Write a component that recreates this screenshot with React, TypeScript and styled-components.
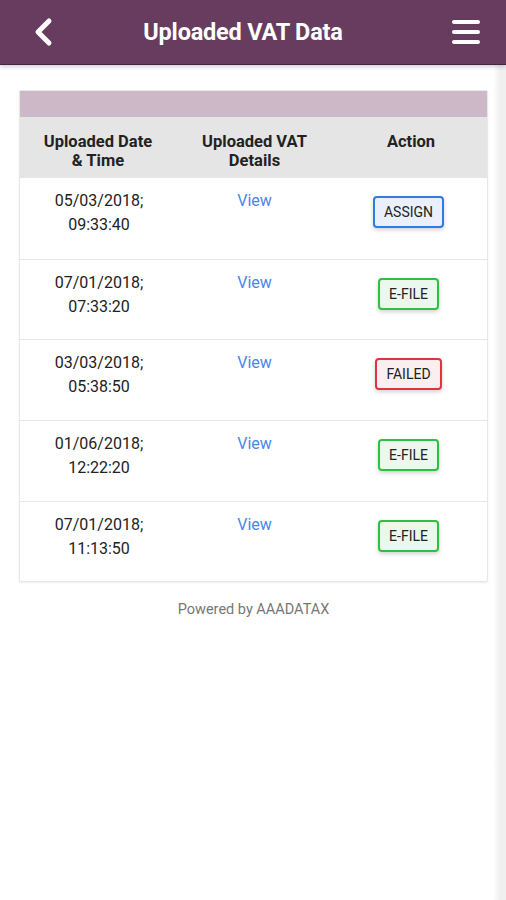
import React from 'react';
import styled, { createGlobalStyle } from 'styled-components';

const GlobalStyle = createGlobalStyle`
  html, body {
    margin: 0;
    padding: 0;
    background: #ffffff;
  }
  body {
    font-family: Roboto, "Liberation Sans", Arial, sans-serif;
  }
`;

type Status = 'assign' | 'efile' | 'failed';

interface IUpload {
  date: string;
  time: string;
  status: Status;
}

const uploads: IUpload[] = [
  { date: '05/03/2018;', time: '09:33:40', status: 'assign' },
  { date: '07/01/2018;', time: '07:33:20', status: 'efile' },
  { date: '03/03/2018;', time: '05:38:50', status: 'failed' },
  { date: '01/06/2018;', time: '12:22:20', status: 'efile' },
  { date: '07/01/2018;', time: '11:13:50', status: 'efile' },
];

const statusStyle: Record<Status, { label: string; border: string; bg: string }> = {
  assign: { label: 'ASSIGN', border: '#2f7be0', bg: '#eaf0fb' },
  efile: { label: 'E-FILE', border: '#2fc043', bg: '#ecf7ee' },
  failed: { label: 'FAILED', border: '#e0323f', bg: '#fbeeee' },
};

const Page = styled.div`
  min-height: 900px;
  display: flex;
  flex-direction: column;
  background: linear-gradient(to right, #ffffff 0, #ffffff 493px, #f0f0f0 500px, #f0f0f0 100%);
`;

const TopBar = styled.header`
  height: 64px;
  background: #683c5f;
  border-bottom: 1px solid #4d2145;
  box-shadow: 0 2px 4px rgba(0, 0, 0, 0.18);
  display: flex;
  align-items: center;
  justify-content: space-between;
  padding: 0 24px 0 28px;
  position: relative;
  z-index: 1;
`;

const Title = styled.h1`
  margin: 0 0 0 -24px;
  color: #ffffff;
  font-size: 23.5px;
  font-weight: 700;
  letter-spacing: -0.2px;
`;

const IconButton = styled.div`
  width: 32px;
  height: 32px;
  display: flex;
  align-items: center;
  justify-content: center;
`;

const Content = styled.main`
  padding: 25px 18px 0 19px;
  width: 469px;
  display: flex;
  flex-direction: column;
  align-items: stretch;
`;

const Card = styled.div`
  background: #ffffff;
  border: 1px solid #e8e8e8;
  border-radius: 2px;
  box-shadow: 0 1px 2px rgba(0, 0, 0, 0.08);
`;

const Band = styled.div`
  height: 26px;
  background: #cdb8c8;
`;

const Grid = styled.div`
  display: grid;
  grid-template-columns: 156px 157px 156px;
`;

const HeadRow = styled(Grid)`
  background: #e5e5e5;
  height: 61px;
  align-items: start;
`;

const HeadCell = styled.div`
  text-align: center;
  font-size: 16.5px;
  font-weight: 700;
  line-height: 19px;
  color: #222222;
  padding: 15px 6px 0;
`;

const Row = styled(Grid)`
  height: 80.7px;
  border-top: 1px solid #e6e6e6;
  box-sizing: border-box;
  &:first-child {
    border-top: none;
  }
`;

const DateCell = styled.div`
  text-align: center;
  font-size: 16px;
  line-height: 24px;
  color: #222222;
  padding-top: 11px;
  padding-left: 2px;
`;

const ViewLink = styled.a`
  justify-self: center;
  font-size: 16px;
  line-height: 24px;
  color: #4a86e8;
  padding-top: 11px;
  text-decoration: none;
`;

const ActionCell = styled.div`
  display: flex;
  justify-content: center;
  padding-top: 18px;
  padding-right: 5px;
`;

const StatusButton = styled.button<{ $border: string; $bg: string }>`
  height: 32px;
  padding: 0 9px;
  font-family: Roboto, "Liberation Sans", Arial, sans-serif;
  font-size: 14px;
  color: #222222;
  background: ${(p) => p.$bg};
  border: 2px solid ${(p) => p.$border};
  border-radius: 4px;
  box-shadow: 0 2px 4px rgba(0, 0, 0, 0.18);
`;

const Footer = styled.p`
  margin: 19px 0 0;
  text-align: center;
  font-size: 14.5px;
  color: #777777;
`;

const BackIcon = () => (
  <svg width="24" height="30" viewBox="0 0 24 30">
    <path d="M17 4 L6 15 L17 26" fill="none" stroke="#fff" strokeWidth="5" strokeLinecap="round" strokeLinejoin="round" />
  </svg>
);

const MenuIcon = () => (
  <svg width="32" height="28" viewBox="0 0 32 28">
    <g stroke="#fff" strokeWidth="4" strokeLinecap="round">
      <line x1="4" y1="4" x2="28" y2="4" />
      <line x1="4" y1="14" x2="28" y2="14" />
      <line x1="4" y1="24" x2="28" y2="24" />
    </g>
  </svg>
);

const App: React.FunctionComponent = () => {
  return (
    <Page>
      <GlobalStyle />
      <TopBar>
        <IconButton><BackIcon /></IconButton>
        <Title>Uploaded VAT Data</Title>
        <IconButton><MenuIcon /></IconButton>
      </TopBar>
      <Content>
        <Card>
          <Band />
          <HeadRow>
            <HeadCell>Uploaded Date<br />&amp; Time</HeadCell>
            <HeadCell>Uploaded VAT<br />Details</HeadCell>
            <HeadCell>Action</HeadCell>
          </HeadRow>
          <div>
            {uploads.map((elem, key) => {
              const s = statusStyle[elem.status];
              return (
                <Row key={key}>
                  <DateCell>{elem.date}<br />{elem.time}</DateCell>
                  <ViewLink href="#">View</ViewLink>
                  <ActionCell>
                    <StatusButton $border={s.border} $bg={s.bg}>{s.label}</StatusButton>
                  </ActionCell>
                </Row>
              );
            })}
          </div>
        </Card>
        <Footer>Powered by AAADATAX</Footer>
      </Content>
    </Page>
  );
};

export default App;
